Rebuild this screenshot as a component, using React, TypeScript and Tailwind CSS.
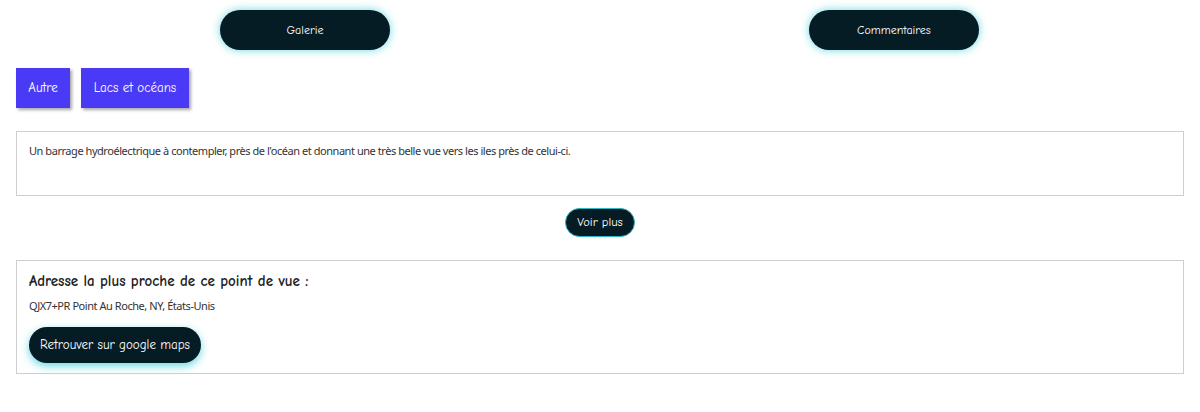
import React from "react";

const hand = { fontFamily: '"Comic Neue", "Noto Sans", "DejaVu Sans", sans-serif' };

export default function App() {
  return (
    <div className="w-[1200px] h-[412px] bg-white px-4 text-[#333]" style={{ fontFamily: '"Noto Sans", "Open Sans", sans-serif' }}>
      <div className="grid grid-cols-2 pt-[10px]">
        <div className="flex justify-center">
          <button className="w-[170px] h-[40px] rounded-[20px] bg-[#061c25] text-white text-[12px] shadow-[0_0_8px_rgba(40,200,210,0.7)] ml-[-6px]" style={hand}>Galerie</button>
        </div>
        <div className="flex justify-center">
          <button className="w-[170px] h-[40px] rounded-[20px] bg-[#061c25] text-white text-[12px] shadow-[0_0_8px_rgba(40,200,210,0.7)] ml-[4px]" style={hand}>Commentaires</button>
        </div>
      </div>
      <div className="flex gap-[11px] mt-[18px]">
        <button className="w-[54px] h-[40px] bg-[#4a3af6] text-white text-[13px] shadow-[2px_2px_3px_rgba(0,0,0,0.35)]" style={hand}>Autre</button>
        <button className="w-[108px] h-[40px] bg-[#4a3af6] text-white text-[13px] shadow-[2px_2px_3px_rgba(0,0,0,0.35)]" style={hand}>Lacs et océans</button>
      </div>
      <div className="mt-[23px] h-[65px] border border-[#cfcfcf] px-3 pt-[11px] text-[11px] tracking-[-0.45px]">
        Un barrage hydroélectrique à contempler, près de l'océan et donnant une très belle vue vers les iles près de celui-ci.
      </div>
      <div className="flex justify-center mt-[12px]">
        <button className="w-[70px] h-[29px] rounded-[15px] bg-[#061c25] border border-[#2fb9c4] text-white text-[12.5px]" style={hand}>Voir plus</button>
      </div>
      <div className="mt-[23px] h-[114px] border border-[#cfcfcf] px-3 pt-[11px]">
        <div className="text-[15px] font-bold text-[#222] leading-[18px]" style={hand}>Adresse la plus proche de ce point de vue :</div>
        <div className="text-[11px] mt-[8px] tracking-[-0.45px]">QJX7+PR Point Au Roche, NY, États-Unis</div>
        <button className="mt-[12px] w-[172px] h-[36px] rounded-[18px] bg-[#061c25] text-white text-[13px] shadow-[0_3px_8px_rgba(40,200,210,0.7)]" style={hand}>Retrouver sur google maps</button>
      </div>
    </div>
  );
}
